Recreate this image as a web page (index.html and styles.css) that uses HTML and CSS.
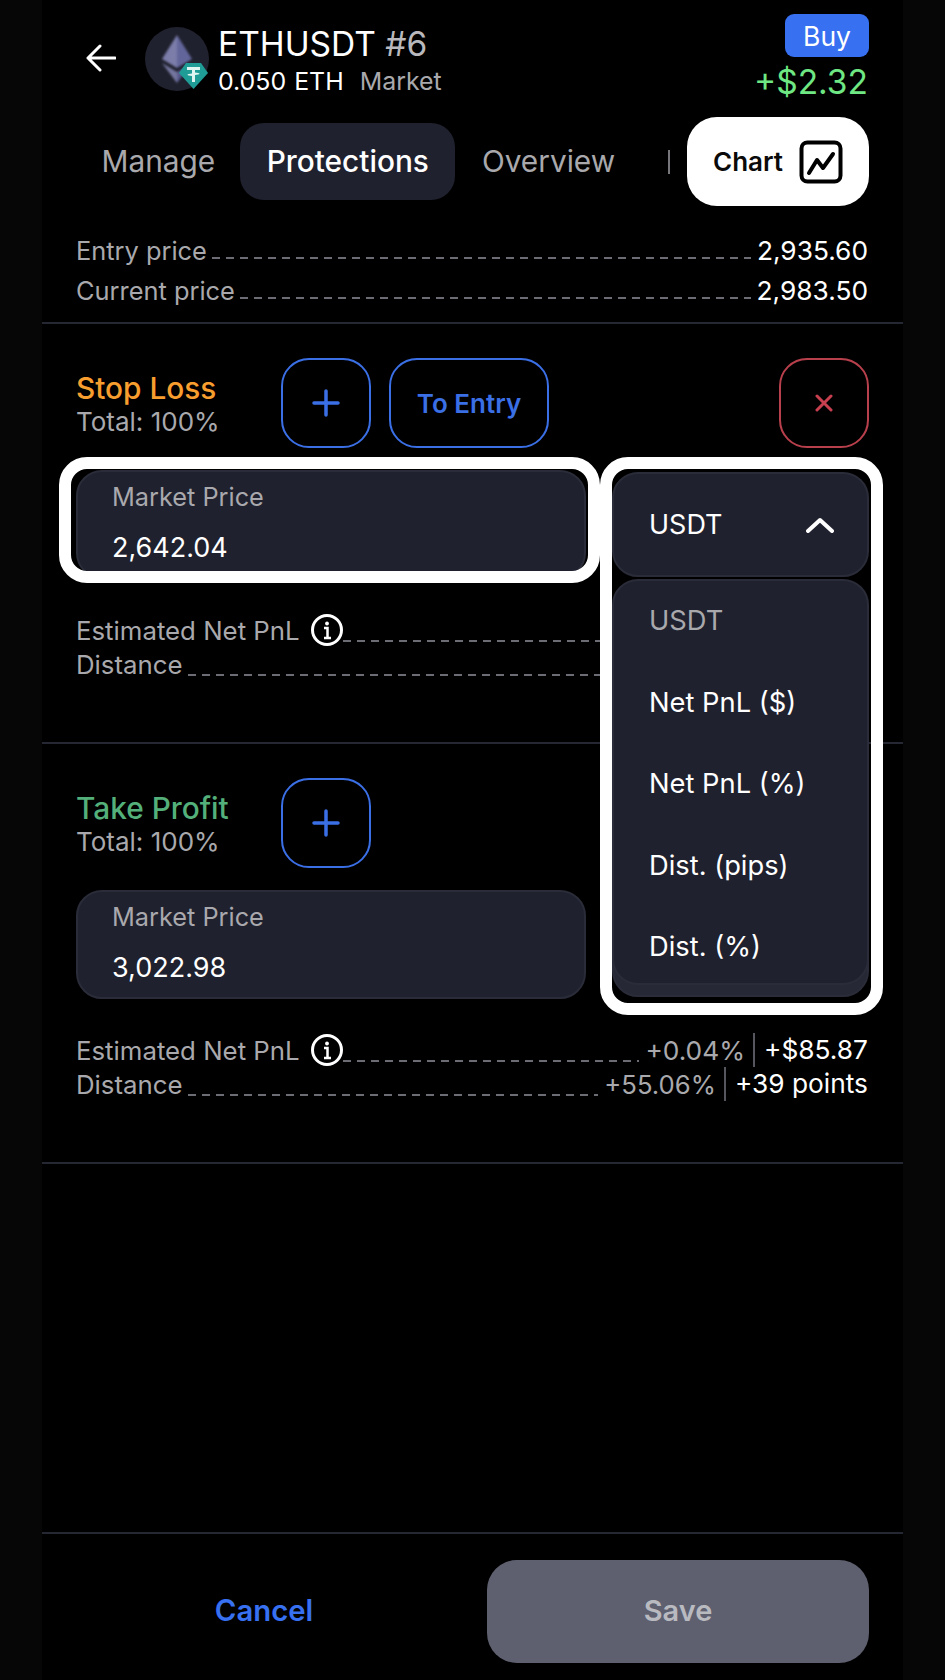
FILE: index.html
```html
<!DOCTYPE html>
<html lang="en">
<head>
<meta charset="utf-8">
<title>ETHUSDT #6 Protections</title>
<link rel="stylesheet" href="styles.css">
</head>
<body>
<main class="app">
  <header class="header">
    <button class="back" aria-label="Back">
      <svg width="30" height="28" viewBox="0 0 30 28" fill="none" stroke="#fff" stroke-width="3" stroke-linecap="round" stroke-linejoin="round"><path d="M29 14H2M14 2 2 14l12 12"/></svg>
    </button>
    <div class="avatar">
      <svg width="70" height="66" viewBox="0 0 70 66">
        <defs><filter id="soft"><feGaussianBlur stdDeviation="1.1"/></filter></defs>
        <circle cx="32" cy="32" r="32" fill="#20212e"/>
        <g filter="url(#soft)">
          <path d="M32 8 17 32l15 9z" fill="#7b7da9"/>
          <path d="M32 8l15 24-15 9z" fill="#62659a"/>
          <path d="M17 36l15 20V45z" fill="#74769f"/>
          <path d="M47 36 32 56V45z" fill="#565a8c"/>
        </g>
        <path d="M41 36h15l7 10-14.500 16L34 46z" fill="#1e9c95"/>
        <path d="M42 40h13v3h-5v2.500c2.400.2 4.500.6 4.500 1.300s-2.100 1.100-4.500 1.300V55h-3v-5.900c-2.400-.2-4.500-.6-4.500-1.300s2.100-1.100 4.500-1.300V43h-5z" fill="#dff5f1"/>
      </svg>
    </div>
    <div class="title">
      <h1 class="name">ETHUSDT <span class="muted-num">#6</span></h1>
      <p class="sub">0.050 ETH <span class="sub-type">Market</span></p>
    </div>
    <div class="head-right">
      <span class="badge">Buy</span>
      <span class="profit">+$2.32</span>
    </div>
  </header>

  <nav class="tabs">
    <a class="tab tab-first">Manage</a>
    <a class="tab tab-active">Protections</a>
    <a class="tab">Overview</a>
    <span class="tab-sep"></span>
    <button class="chart-btn">Chart
      <svg width="44" height="44" viewBox="0 0 44 44" fill="none" stroke="#000" stroke-linecap="round" stroke-linejoin="round"><rect x="2.500" y="2.500" width="39" height="39" rx="6" stroke-width="4"/><path d="M10 33l8-13 6 8 10-14" stroke-width="4"/></svg>
    </button>
  </nav>

  <section class="summary">
    <div class="row"><span class="label">Entry price</span><i class="dash"></i><span class="val">2,935.60</span></div>
    <div class="row"><span class="label">Current price</span><i class="dash"></i><span class="val">2,983.50</span></div>
  </section>

  <section class="block">
    <div class="block-head">
      <div class="block-title">
        <h2 class="h-stop">Stop Loss</h2>
        <p class="total">Total: 100%</p>
      </div>
      <button class="icon-btn" aria-label="Add">
        <svg width="28" height="28" viewBox="0 0 28 28" stroke="#3b6fe6" stroke-width="3.500" stroke-linecap="round"><path d="M14 2v24M2 14h24"/></svg>
      </button>
      <button class="text-btn">To Entry</button>
      <button class="icon-btn danger" aria-label="Remove">
        <svg width="18" height="18" viewBox="0 0 18 18" stroke="#c8404f" stroke-width="3" stroke-linecap="round"><path d="M2 2l14 14M16 2 2 16"/></svg>
      </button>
    </div>
    <div class="inputs">
      <div class="field">
        <span class="field-label">Market Price</span>
        <span class="field-value">2,642.04</span>
        <span class="frame frame-field"></span>
      </div>
      <div class="select">
        <span class="select-text">USDT</span>
        <svg width="28" height="16" viewBox="0 0 28 16" fill="none" stroke="#fff" stroke-width="4" stroke-linecap="round" stroke-linejoin="round"><path d="M2 14 14 3l12 11"/></svg>
        <ul class="menu">
          <li class="menu-item menu-current">USDT</li>
          <li class="menu-item">Net PnL ($)</li>
          <li class="menu-item">Net PnL (%)</li>
          <li class="menu-item">Dist. (pips)</li>
          <li class="menu-item">Dist. (%)</li>
        </ul>
        <span class="frame frame-select"></span>
      </div>
    </div>
    <div class="stats">
      <div class="row row-tight">
        <span class="label">Estimated Net PnL</span>
        <svg class="info" width="32" height="32" viewBox="0 0 32 32" fill="none" stroke="#fff"><circle cx="16" cy="16" r="14.500" stroke-width="3"/><circle cx="16" cy="9.500" r="1.900" fill="#fff" stroke="none"/><path d="M13 14h3.500v10M13 24h7" stroke-width="2.500"/></svg>
        <i class="dash"></i>
      </div>
      <div class="row row-tight"><span class="label">Distance</span><i class="dash"></i></div>
    </div>
  </section>

  <section class="block">
    <div class="block-head">
      <div class="block-title">
        <h2 class="h-take">Take Profit</h2>
        <p class="total">Total: 100%</p>
      </div>
      <button class="icon-btn" aria-label="Add">
        <svg width="28" height="28" viewBox="0 0 28 28" stroke="#3b6fe6" stroke-width="3.500" stroke-linecap="round"><path d="M14 2v24M2 14h24"/></svg>
      </button>
    </div>
    <div class="inputs">
      <div class="field">
        <span class="field-label">Market Price</span>
        <span class="field-value">3,022.98</span>
      </div>
      <div class="select select-under"></div>
    </div>
    <div class="stats">
      <div class="row row-tight">
        <span class="label">Estimated Net PnL</span>
        <svg class="info" width="32" height="32" viewBox="0 0 32 32" fill="none" stroke="#fff"><circle cx="16" cy="16" r="14.500" stroke-width="3"/><circle cx="16" cy="9.500" r="1.900" fill="#fff" stroke="none"/><path d="M13 14h3.500v10M13 24h7" stroke-width="2.500"/></svg>
        <i class="dash"></i>
        <span class="pct">+0.04%</span><span class="val val-split">+$85.87</span>
      </div>
      <div class="row row-tight">
        <span class="label">Distance</span><i class="dash"></i>
        <span class="pct pct-tight">+55.06%</span><span class="val val-split">+39 points</span>
      </div>
    </div>
  </section>

  <div class="spacer"></div>

  <footer class="footer">
    <button class="cancel">Cancel</button>
    <button class="save">Save</button>
  </footer>
</main>
</body>
</html>
```

FILE: styles.css
```css
* { box-sizing: border-box; }
html, body { margin: 0; padding: 0; }
body {
  background: #060606;
  color: #fff;
  font-family: Inter, "Liberation Sans", sans-serif;
}
h1, h2, p, ul { margin: 0; padding: 0; font-weight: 400; }
button { font-family: inherit; background: none; border: 0; padding: 0; color: inherit; }

.app {
  width: 861px;
  height: 1680px;
  margin-left: 42px;
  background: #000;
  display: flex;
  flex-direction: column;
  position: relative;
  overflow: hidden;
}

/* header */
.header {
  height: 117px;
  padding: 14px 34px 0 44px;
  display: flex;
  align-items: flex-start;
}
.back { width: 30px; height: 28px; margin-top: 30px; display: flex; }
.avatar { width: 70px; height: 66px; margin: 13px 3px 0 29px; flex: none; }
.title { flex: 1; padding-top: 10px; }
.name { font-size: 33.500px; line-height: 40px; }
.muted-num { color: #b9b9bd; }
.sub { font-size: 24.900px; line-height: 29px; margin-top: 3px; word-spacing: 1px; }
.sub-type { color: #a9a9ad; margin-left: 8px; }
.head-right { display: flex; flex-direction: column; align-items: flex-end; }
.badge {
  width: 84px;
  height: 43px;
  border-radius: 9px;
  background: #3770f0;
  font-size: 26.500px;
  line-height: 44px;
  text-align: center;
}
.profit { font-size: 33.500px; line-height: 40px; color: #6fe884; margin-top: 5px; margin-right: 1px; }

/* tabs */
.tabs {
  height: 89px;
  padding: 0 34px 0 33px;
  display: flex;
  align-items: center;
  flex: none;
}
.tab {
  padding: 0 26.500px;
  height: 77px;
  line-height: 77px;
  font-size: 29.800px;
  font-weight: 400;
  color: #a9a9ad;
}
.tab-first { padding-right: 25px; }
.tab-active { background: #1f212e; border-radius: 24px; color: #fff; font-weight: 500; }
.tab-sep { width: 2px; height: 24px; background: #77777b; margin-left: 26px; }
.chart-btn {
  width: 182px;
  height: 89px;
  border-radius: 30px;
  background: #fff;
  color: #0a0a0a;
  margin-left: auto;
  padding: 0 26px;
  display: flex;
  align-items: center;
  justify-content: space-between;
  font-size: 26px;
  font-weight: 600;
}

/* label rows */
.summary { padding: 25px 35px 0 34px; height: 118px; flex: none; border-bottom: 2px solid #252733; }
.row { display: flex; align-items: center; height: 39.600px; font-size: 25.400px; }
.row-tight { height: 34px; font-size: 25.800px; }
.label { color: #a9a9ad; flex: none; }
.val { color: #fff; flex: none; font-size: 26.300px; }
.pct { color: #a9a9ad; flex: none; font-size: 26.300px; }
.pct-tight { font-size: 25.700px; }
.dash {
  flex: 1;
  height: 2px;
  margin: 15px 6px 0 5px;
  background: repeating-linear-gradient(90deg, #6b6c74 0 8px, transparent 8px 14px);
}
.row-tight .dash { margin-top: 22px; }
.val-split {
  margin-left: 8px;
  padding-left: 9px;
  border-left: 2px solid #55565e;
  line-height: 34px;
}
.info { margin-left: 11px; flex: none; }
.row-tight .info + .dash { margin-left: 0; }

/* blocks */
.block { height: 420px; flex: none; padding: 34px 34px 0 34px; border-bottom: 2px solid #252733; }
.block-head { display: flex; align-items: center; height: 90px; gap: 18px; }
.block-title { width: 187px; flex: none; }
.block-title h2 { font-size: 29.800px; line-height: 38px; font-weight: 500; }
.h-stop { color: #f79e2f; }
.h-take { color: #54b07a; }
.total { font-size: 26px; line-height: 30px; color: #a9a9ad; }
.icon-btn {
  width: 90px;
  height: 90px;
  border: 2px solid #3b6fe6;
  border-radius: 28px;
  display: flex;
  align-items: center;
  justify-content: center;
  flex: none;
}
.danger { border-color: #b8404c; margin-left: auto; }
.text-btn {
  width: 160px;
  height: 90px;
  border: 2px solid #3b6fe6;
  border-radius: 28px;
  color: #3b6fe6;
  font-size: 26px;
  font-weight: 600;
  flex: none;
}

.inputs { display: flex; gap: 26px; margin-top: 22px; align-items: flex-start; }
.field {
  position: relative;
  width: 510px;
  height: 109px;
  border-radius: 26px;
  background: #1f212e;
  border: 2px solid #2a2c39;
  padding: 7px 0 0 34px;
  display: flex;
  flex-direction: column;
}
.field-label { font-size: 25.300px; line-height: 36px; color: #a9a9ad; }
.field-value { font-size: 27px; line-height: 36px; margin-top: 15px; }
.select {
  position: relative;
  width: 257px;
  height: 105px;
  margin-top: 2px;
  border-radius: 26px;
  background: #1f212e;
  border: 2px solid #2a2c39;
  padding: 0 33px 0 35px;
  display: flex;
  align-items: center;
  justify-content: space-between;
  font-size: 27px;
  z-index: 2;
}
.select-under { z-index: 0; background: #262835; }

.menu {
  position: absolute;
  left: -2px;
  right: -2px;
  top: 105px;
  height: 406px;
  list-style: none;
  background: #1f212e;
  border: 2px solid #2a2c39;
  border-radius: 26px;
  z-index: 3;
}
.menu-item { height: 81.500px; padding-left: 35px; line-height: 79px; font-size: 27.300px; color: #fff; }
.menu-current { color: #a9a9ad; }

.frame {
  position: absolute;
  border: 12px solid #fff;
  border-radius: 28px;
  pointer-events: none;
  z-index: 4;
}
.frame-field { left: -19px; right: -16px; top: -15px; bottom: -6px; }
.frame-select { left: -14px; right: -16px; top: -17px; height: 558px; }

.stats { margin-top: 34px; padding-right: 1px; }

.spacer { flex: 1; }

.footer {
  height: 148px;
  flex: none;
  border-top: 2px solid #252733;
  padding: 26px 34px 0 34px;
  display: flex;
  align-items: flex-start;
}
.cancel {
  width: 376px;
  height: 103px;
  padding-bottom: 2px;
  color: #3770f0;
  font-size: 29.300px;
  font-weight: 600;
}
.save {
  margin-left: auto;
  width: 382px;
  height: 103px;
  padding-bottom: 2px;
  border-radius: 30px;
  background: #5e6070;
  color: #b9bac0;
  font-size: 29px;
  font-weight: 600;
}
```
